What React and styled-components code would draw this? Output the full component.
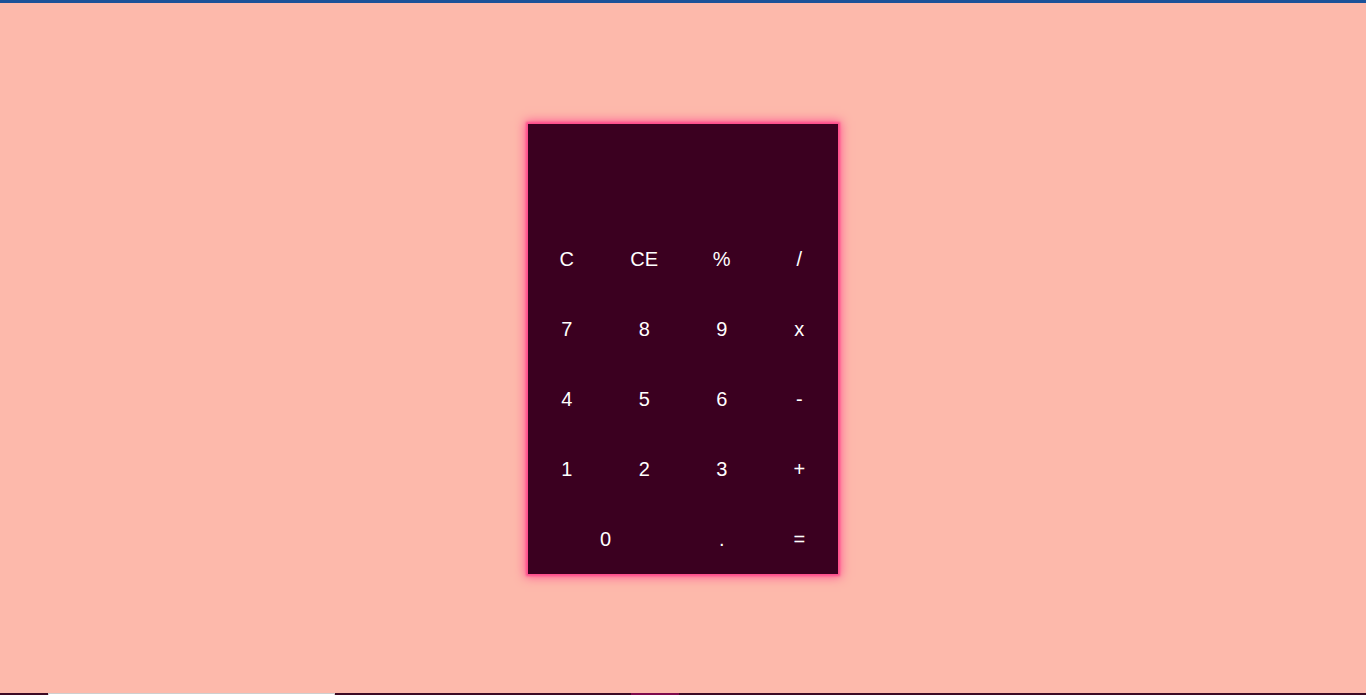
import React from "react";
import styled, { createGlobalStyle } from "styled-components";

const Global = createGlobalStyle`
  html, body { margin: 0; padding: 0; }
  body {
    background: #fdb9ab;
    font-family: "Liberation Sans", Arial, sans-serif;
    overflow: hidden;
  }
`;

const TopBar = styled.div`
  height: 3px;
  background: #1b5299;
`;

const Main = styled.main`
  height: 688px;
  padding-top: 2px;
  display: flex;
  align-items: center;
  justify-content: center;
`;

const Calculator = styled.div`
  width: 310px;
  background: #3b0020;
  box-shadow: 0 0 2px 2px #ff4d8d, 0 0 10px 3px #ff5a94;
  display: flex;
  flex-direction: column;
`;

const Display = styled.div`
  height: 100px;
`;

const Keys = styled.div`
  display: grid;
  grid-template-columns: repeat(4, 1fr);
  grid-auto-rows: 70px;
`;

const Key = styled.button`
  grid-column: span ${(p) => p.$span || 1};
  background: transparent;
  border: none;
  color: #ffffff;
  font-family: "Liberation Sans", Arial, sans-serif;
  font-size: 20px;
  padding: 0;
  cursor: pointer;
  display: flex;
  align-items: center;
  justify-content: center;
`;

const Footer = styled.div`
  height: 2px;
  background: #3d0a24;
  display: flex;
`;

const FooterInput = styled.div`
  margin-left: 48px;
  width: 285px;
  background: #ffffff;
  border: 1px solid #cfcfcf;
  border-bottom: none;
`;

const FooterAccent = styled.div`
  margin-left: 296px;
  width: 48px;
  background: #7e0a4c;
`;

const keys = [
  ["C"], ["CE"], ["%"], ["/"],
  ["7"], ["8"], ["9"], ["x"],
  ["4"], ["5"], ["6"], ["-"],
  ["1"], ["2"], ["3"], ["+"],
  ["0", 2], ["."], ["="],
];

export default function App() {
  return (
    <>
      <Global />
      <TopBar />
      <Main>
        <Calculator>
          <Display />
          <Keys>
            {keys.map(([label, span]) => (
              <Key key={label} $span={span}>
                {label}
              </Key>
            ))}
          </Keys>
        </Calculator>
      </Main>
      <Footer>
        <FooterInput />
        <FooterAccent />
      </Footer>
    </>
  );
}
